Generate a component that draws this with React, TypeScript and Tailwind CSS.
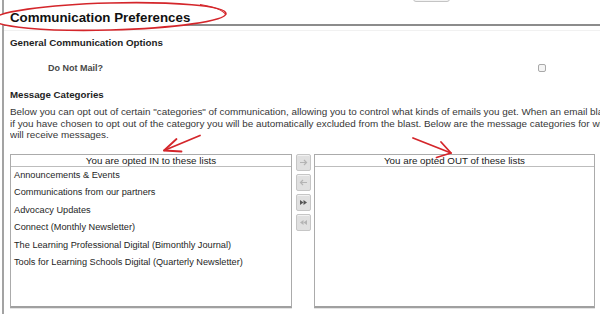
import React from "react";

const inItems = [
  "Announcements & Events",
  "Communications from our partners",
  "Advocacy Updates",
  "Connect (Monthly Newsletter)",
  "The Learning Professional Digital (Bimonthly Journal)",
  "Tools for Learning Schools Digital (Quarterly Newsletter)",
];

function MoveButton({ kind }: { kind: "right" | "left" | "allRight" | "allLeft" }) {
  const active = kind === "allRight";
  const c = active ? "#555" : "#b4b4b4";
  return (
    <div className="w-[15px] h-[17px] rounded-[2px] border border-[#c6c6c6] bg-[#e0e0e0] flex items-center justify-center shadow-[inset_0_1px_0_#f2f2f2]">
      <svg width="9" height="7" viewBox="0 0 9 7">
        {kind === "right" && (
          <g stroke={c} strokeWidth="1.2" fill="none">
            <path d="M1 3.5H7.5M5 1L7.5 3.5L5 6" />
          </g>
        )}
        {kind === "left" && (
          <g stroke={c} strokeWidth="1.2" fill="none">
            <path d="M8 3.5H1.5M4 1L1.5 3.5L4 6" />
          </g>
        )}
        {kind === "allRight" && (
          <g fill={c}>
            <path d="M1 1L4.5 3.5L1 6Z" />
            <path d="M4.5 1L8 3.5L4.5 6Z" />
          </g>
        )}
        {kind === "allLeft" && (
          <g fill={c}>
            <path d="M8 1L4.5 3.5L8 6Z" />
            <path d="M4.5 1L1 3.5L4.5 6Z" />
          </g>
        )}
      </svg>
    </div>
  );
}

function ListBox({ title, items, width }: { title: string; items: string[]; width: string }) {
  return (
    <div
      className={`${width} h-[154px] border border-[#ababab] border-b-2 border-b-[#a0a0a0] bg-white flex flex-col shadow-[0_1px_0_#e4e4e4]`}
    >
      <div className="h-[12px] border-b border-[#bdbdbd] text-center text-[9.8px] leading-[11px] text-[#1a1a1a]">
        {title}
      </div>
      <div className="flex flex-col pl-[3px]">
        {items.map((it) => (
          <div key={it} className="text-[9.2px] leading-[17.6px] text-[#1e1e1e] whitespace-nowrap">
            {it}
          </div>
        ))}
      </div>
    </div>
  );
}

export default function App() {
  return (
    <div
      className="relative w-[600px] h-[314px] overflow-hidden bg-white"
      style={{ fontFamily: '"Liberation Sans", Arial, sans-serif' }}
    >
      <div className="ml-[2px] h-full border-l-2 border-[#a3a3a3]">
        {/* heading row */}
        <div className="h-[26px] border-b-2 border-[#8c8c8c] flex items-start pl-[6px]">
          <div className="relative z-10 w-[403px] pt-[10px] text-[13.3px] leading-[15px] font-bold text-[#111] whitespace-nowrap">
            Communication Preferences
          </div>
          <div className="w-[37px] h-[12px] -mt-[10px] rounded-[3px] border border-[#c4c4c4] bg-[#f3f3f3]" />
        </div>
        <div className="h-[1px] mt-[4px] bg-[#f1f1f1]" />

        <div className="pl-[6px]">
          <div className="mt-[6px] text-[9.8px] leading-[12px] font-bold text-[#1e1e1e]">
            General Communication Options
          </div>

          <div className="mt-[13px] h-[12px] flex items-center">
            <div className="w-[528px] pl-[38px] text-[9px] leading-[12px] font-bold text-[#484848]">
              Do Not Mail?
            </div>
            <div className="w-[8px] h-[8px] rounded-[2px] border border-[#a9a9a9] bg-[#f4f4f4]" />
          </div>

          <div className="mt-[15px] text-[9.7px] leading-[12px] font-bold text-[#1e1e1e]">
            Message Categories
          </div>

          <div className="mt-[5px] w-[590px] overflow-hidden text-[9.9px] leading-[11.5px] text-[#363636] whitespace-nowrap">
            <div>
              Below you can opt out of certain "categories" of communication, allowing you to control what kinds of emails you get. When an email blast is sent,
            </div>
            <div>
              if you have chosen to opt out of the category you will be automatically excluded from the blast. Below are the message categories for which you
            </div>
            <div>will receive messages.</div>
          </div>

          <div className="mt-[13px] flex items-start">
            <ListBox title="You are opted IN to these lists" items={inItems} width="w-[282px]" />
            <div className="ml-[4px] flex flex-col gap-[3px]">
              <MoveButton kind="right" />
              <MoveButton kind="left" />
              <MoveButton kind="allRight" />
              <MoveButton kind="allLeft" />
            </div>
            <div className="ml-[3px]">
              <ListBox title="You are opted OUT of these lists" items={[]} width="w-[281px]" />
            </div>
          </div>
        </div>
      </div>

      {/* red annotation ellipse (white-filled, sits under heading text) */}
      <svg
        className="absolute left-0 top-0 z-[5] pointer-events-none"
        width="600"
        height="40"
        viewBox="0 0 600 40"
      >
        <ellipse
          cx="110"
          cy="16.5"
          rx="116"
          ry="13.5"
          transform="rotate(-1.5 110 16.5)"
          fill="white"
          stroke="#d4262b"
          strokeWidth="1.6"
        />
        <path d="M200 4.5 Q222 8 226 15" stroke="#d4262b" strokeWidth="1.2" fill="none" />
      </svg>

      {/* red arrows */}
      <svg
        className="absolute left-0 top-0 z-20 pointer-events-none"
        width="600"
        height="314"
        viewBox="0 0 600 314"
      >
        <g stroke="#d4262b" strokeWidth="1.8" fill="none" strokeLinecap="round" strokeLinejoin="round">
          <path d="M200 135.5 L164 150.5" />
          <path d="M176.5 139 L164 150.5 L181.5 151.5" />
          <path d="M413 138 L451 153" />
          <path d="M441 142 L451 153 L436.5 157.5" />
        </g>
      </svg>
    </div>
  );
}
